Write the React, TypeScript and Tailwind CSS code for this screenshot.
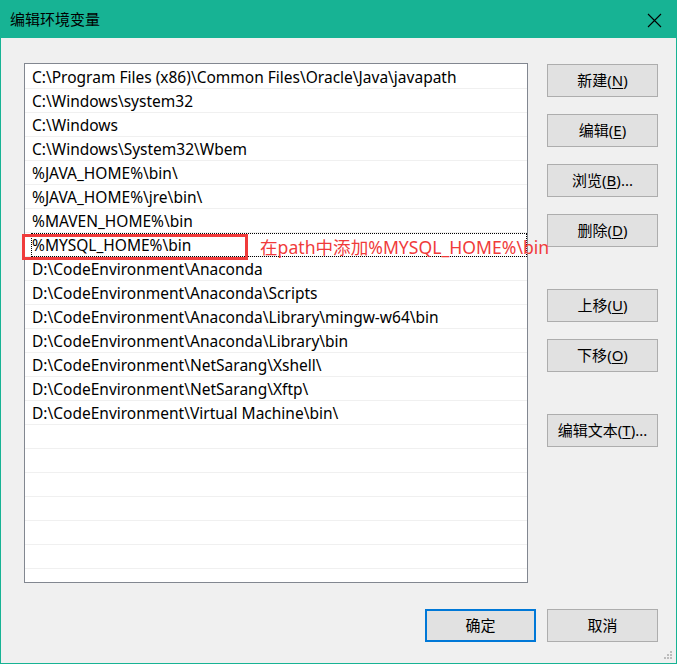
import React from "react";

const paths = [
  "C:\\Program Files (x86)\\Common Files\\Oracle\\Java\\javapath",
  "C:\\Windows\\system32",
  "C:\\Windows",
  "C:\\Windows\\System32\\Wbem",
  "%JAVA_HOME%\\bin\\",
  "%JAVA_HOME%\\jre\\bin\\",
  "%MAVEN_HOME%\\bin",
  "%MYSQL_HOME%\\bin",
  "D:\\CodeEnvironment\\Anaconda",
  "D:\\CodeEnvironment\\Anaconda\\Scripts",
  "D:\\CodeEnvironment\\Anaconda\\Library\\mingw-w64\\bin",
  "D:\\CodeEnvironment\\Anaconda\\Library\\bin",
  "D:\\CodeEnvironment\\NetSarang\\Xshell\\",
  "D:\\CodeEnvironment\\NetSarang\\Xftp\\",
  "D:\\CodeEnvironment\\Virtual Machine\\bin\\",
];

const font = { fontFamily: '"Noto Sans", "Noto Sans CJK SC", sans-serif' };

function Btn({ label, k, suffix = "", primary = false }: { label: string; k?: string; suffix?: string; primary?: boolean }) {
  return (
    <div
      className={
        "flex h-[33px] w-[111px] items-center justify-center bg-[#e1e1e1] text-[15px] text-black " +
        (primary ? "border-2 border-[#0078d7]" : "border border-[#adadad]")
      }
    >
      <span>
        {label}
        {k ? (
          <>
            (<span className="underline underline-offset-2">{k}</span>)
          </>
        ) : null}
        {suffix}
      </span>
    </div>
  );
}

export default function App() {
  const emptyRows = 7;
  return (
    <div className="relative h-[664px] w-[677px] overflow-hidden border border-[#17b394] bg-[#f0f0f0]" style={font}>
      {/* title bar */}
      <div className="flex h-[37px] items-center justify-between bg-[#17b394] pl-[9px] pr-[14px]">
        <span className="text-[15px] text-black">编辑环境变量</span>
        <svg width="15" height="15" viewBox="0 0 15 15" className="mt-[1px]">
          <path d="M1 1 L14 14 M14 1 L1 14" stroke="#000" strokeWidth="1.1" fill="none" />
        </svg>
      </div>

      {/* body */}
      <div className="flex flex-col px-[18px] pl-[23px] pt-[25px]">
        <div className="flex gap-[19px]">
          {/* list */}
          <div className="h-[520px] w-[504px] overflow-hidden border border-[#828790] bg-white pt-[1px]">
            {paths.map((p, i) => (
              <div
                key={i}
                className="relative flex h-[24px] items-center border-b border-[#f0f0f0] pl-[7px] text-[15.5px] leading-none text-black"
              >
                {i === 7 ? (
                  <div className="pointer-events-none absolute bottom-[-1px] left-[6px] right-0 top-0 border border-dotted border-black" />
                ) : null}
                <span className="mt-[2px] whitespace-nowrap">{p}</span>
              </div>
            ))}
            {Array.from({ length: emptyRows }).map((_, i) => (
              <div key={"e" + i} className="h-[24px] border-b border-[#f0f0f0]" />
            ))}
          </div>

          {/* buttons */}
          <div className="flex flex-col pt-[1px]">
            <div className="flex flex-col gap-[17px]">
              <Btn label="新建" k="N" />
              <Btn label="编辑" k="E" />
              <Btn label="浏览" k="B" suffix="..." />
              <Btn label="删除" k="D" />
            </div>
            <div className="mt-[42px] flex flex-col gap-[17px]">
              <Btn label="上移" k="U" />
              <Btn label="下移" k="O" />
            </div>
            <div className="mt-[42px]">
              <Btn label="编辑文本" k="T" suffix="..." />
            </div>
          </div>
        </div>

        {/* bottom buttons */}
        <div className="mt-[26px] flex justify-end gap-[11px]">
          <div className="w-[111px]">
            <Btn label="确定" primary />
          </div>
          <Btn label="取消" />
        </div>
      </div>

      {/* annotation overlay */}
      <div className="pointer-events-none absolute left-[21px] top-[233px] h-[26px] w-[226px] border-[3px] border-[#f03b3b]" />
      <div className="pointer-events-none absolute left-[259px] top-[234px] whitespace-nowrap text-[17.6px] leading-[24px] text-[#f03b3b]">
        在path中添加%MYSQL_HOME%\bin
      </div>

      {/* resize grip */}
      <svg className="absolute bottom-[1px] right-[3px]" width="11" height="11" viewBox="0 0 11 11">
        <g fill="#bcbcbc">
          <rect x="8" y="0" width="2" height="2" />
          <rect x="5" y="3" width="2" height="2" />
          <rect x="8" y="3" width="2" height="2" />
          <rect x="2" y="6" width="2" height="2" />
          <rect x="5" y="6" width="2" height="2" />
          <rect x="8" y="6" width="2" height="2" />
        </g>
      </svg>
    </div>
  );
}
